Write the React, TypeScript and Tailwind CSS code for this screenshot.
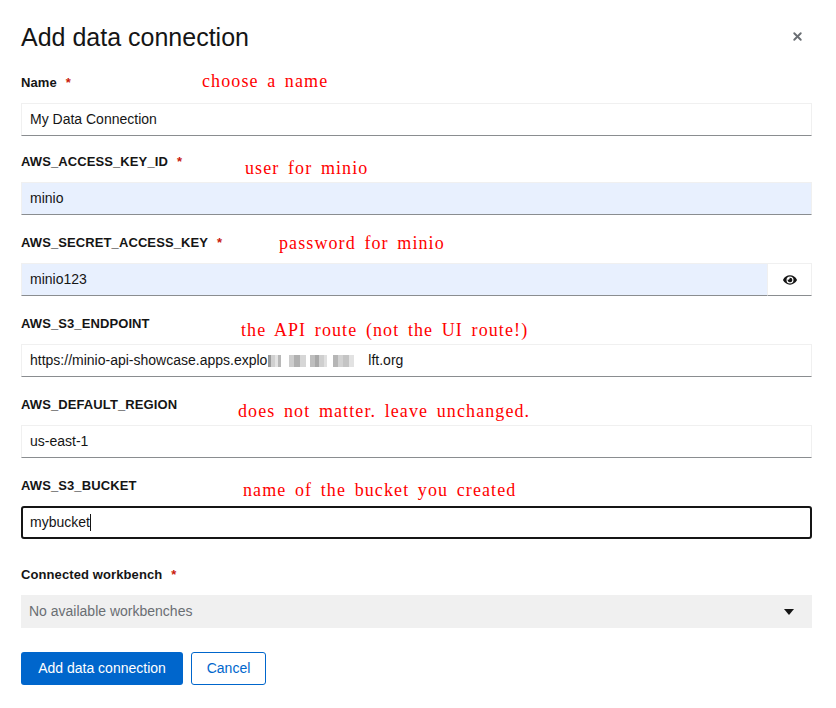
import React from 'react';
import { X } from 'lucide-react';

interface FieldProps {
  label: string;
  required?: boolean;
  note?: string;
  noteClass?: string;
  className?: string;
  children: React.ReactNode;
}

const inputBase =
  "h-[33px] w-full flex items-center px-2 text-[14px] text-[#151515] border border-[#f0f0f0] border-b-[#8a8d90]";

const Field: React.FC<FieldProps> = ({ label, required, note, noteClass, className, children }) => (
  <div className={`flex flex-col ${className ?? ''}`}>
    <div className="relative h-[21px] flex items-center mb-[10px]">
      <span className="text-[13px] font-bold text-[#151515] tracking-[0.1px]">{label}</span>
      {required && <span className="ml-[9px] text-[13px] font-bold text-[#c9190b]">*</span>}
      {note && (
        <span
          className={`absolute whitespace-nowrap text-[18px] text-[#ff0000] font-['Liberation_Serif',serif] tracking-[1.1px] [word-spacing:3px] ${noteClass}`}
        >
          {note}
        </span>
      )}
    </div>
    {children}
  </div>
);

// pixelated redaction blocks in the endpoint url
const blur = [
  { w: 3, c: '#9a9a9a' }, { w: 4, c: '#d0d0d0' }, { w: 3, c: '#e4e4e4' }, { w: 3, c: '#b8b8b8' },
  { w: 8, c: '#ffffff' }, { w: 5, c: '#cdcdcd' }, { w: 6, c: '#b0b0b0' }, { w: 6, c: '#d6d6d6' },
  { w: 4, c: '#ffffff' }, { w: 5, c: '#bebebe' }, { w: 4, c: '#a8a8a8' }, { w: 5, c: '#cfcfcf' },
  { w: 3, c: '#e0e0e0' }, { w: 6, c: '#ffffff' }, { w: 5, c: '#b6b6b6' }, { w: 5, c: '#d2d2d2' },
  { w: 6, c: '#c4c4c4' }, { w: 5, c: '#e2e2e2' },
];

export default function App() {
  return (
    <div className="w-[836px] h-[708px] bg-white pl-[21px] pr-[24px] font-['Liberation_Sans',Arial,sans-serif] text-[#151515]">
      {/* Header */}
      <div className="flex items-center justify-between pt-[20px] h-[53px]">
        <h1 className="text-[25px] leading-[30px] text-[#151515]">Add data connection</h1>
        <button className="mr-[8px] text-[#6a6e73]">
          <X size={13} strokeWidth={3.5} />
        </button>
      </div>

      <div className="flex flex-col gap-[17px] mt-[19px]">
        <Field label="Name" required note="choose a name" noteClass="left-[181px] top-[-4px]" className="mb-[-2px]">
          <div className={inputBase}>My Data Connection</div>
        </Field>

        <Field label="AWS_ACCESS_KEY_ID" required note="user for minio" noteClass="left-[224px] top-[4px]">
          <div className={`${inputBase} bg-[#e8f0fe]`}>minio</div>
        </Field>

        <Field label="AWS_SECRET_ACCESS_KEY" required note="password for minio" noteClass="left-[258px] top-[-2px]">
          <div className="flex h-[33px]">
            <div className={`${inputBase} bg-[#e8f0fe] flex-1`}>minio123</div>
            <div className="w-[44px] h-[33px] flex items-center justify-center border border-l-0 border-[#f0f0f0] border-b-[#8a8d90]">
              <svg width="14" height="10" viewBox="0 0 576 400" fill="#151515">
                <path d="M572.5 185.4C518.3 79.5 410.9 8 288 8S57.7 79.6 3.5 185.4a32.4 32.4 0 0 0 0 29.2C57.7 320.5 165.1 392 288 392s230.3-71.6 284.5-177.4a32.4 32.4 0 0 0 0-29.2zM288 344a144 144 0 1 1 144-144 143.9 143.9 0 0 1-144 144zm0-240a95.3 95.3 0 0 0-25.3 3.8 47.9 47.9 0 0 1-66.9 66.9A95.8 95.8 0 1 0 288 104z" />
              </svg>
            </div>
          </div>
        </Field>

        <Field label="AWS_S3_ENDPOINT" note="the API route (not the UI route!)" noteClass="left-[220px] top-[4px]">
          <div className={inputBase}>
            <span>https://minio-api-showcase.apps.explo</span>
            <span className="flex items-center ml-[1px] h-[14px]">
              {blur.map((b, i) => (
                <span key={i} className="h-[12px]" style={{ width: b.w, background: b.c }} />
              ))}
            </span>
            <span className="ml-[14px]">lft.org</span>
          </div>
        </Field>

        <Field label="AWS_DEFAULT_REGION" note="does not matter. leave unchanged." noteClass="left-[217px] top-[4px]">
          <div className={inputBase}>us-east-1</div>
        </Field>

        <Field label="AWS_S3_BUCKET" note="name of the bucket you created" noteClass="left-[222px] top-[2px]">
          <div className="h-[33px] w-full flex items-center px-[7px] text-[14px] text-[#151515] border-2 border-[#151515] rounded-[3px]">
            mybucket
            <span className="inline-block w-[1px] h-[17px] bg-[#151515]" />
          </div>
        </Field>

        <div className="mt-[8px]">
          <Field label="Connected workbench" required>
            <div className="h-[33px] w-full flex items-center justify-between pl-2 pr-[18px] text-[14px] text-[#6a6e73] bg-[#f0f0f0]">
              No available workbenches
              <svg width="10" height="6" viewBox="0 0 10 6">
                <path d="M0 0h10L5 6z" fill="#151515" />
              </svg>
            </div>
          </Field>
        </div>
      </div>

      {/* Actions */}
      <div className="flex gap-[8px] mt-[24px]">
        <button className="h-[33px] w-[162px] rounded-[3px] bg-[#0066cc] text-white text-[14px]">
          Add data connection
        </button>
        <button className="h-[33px] w-[75px] rounded-[3px] border border-[#0066cc] text-[#0066cc] text-[14px]">
          Cancel
        </button>
      </div>
    </div>
  );
}
